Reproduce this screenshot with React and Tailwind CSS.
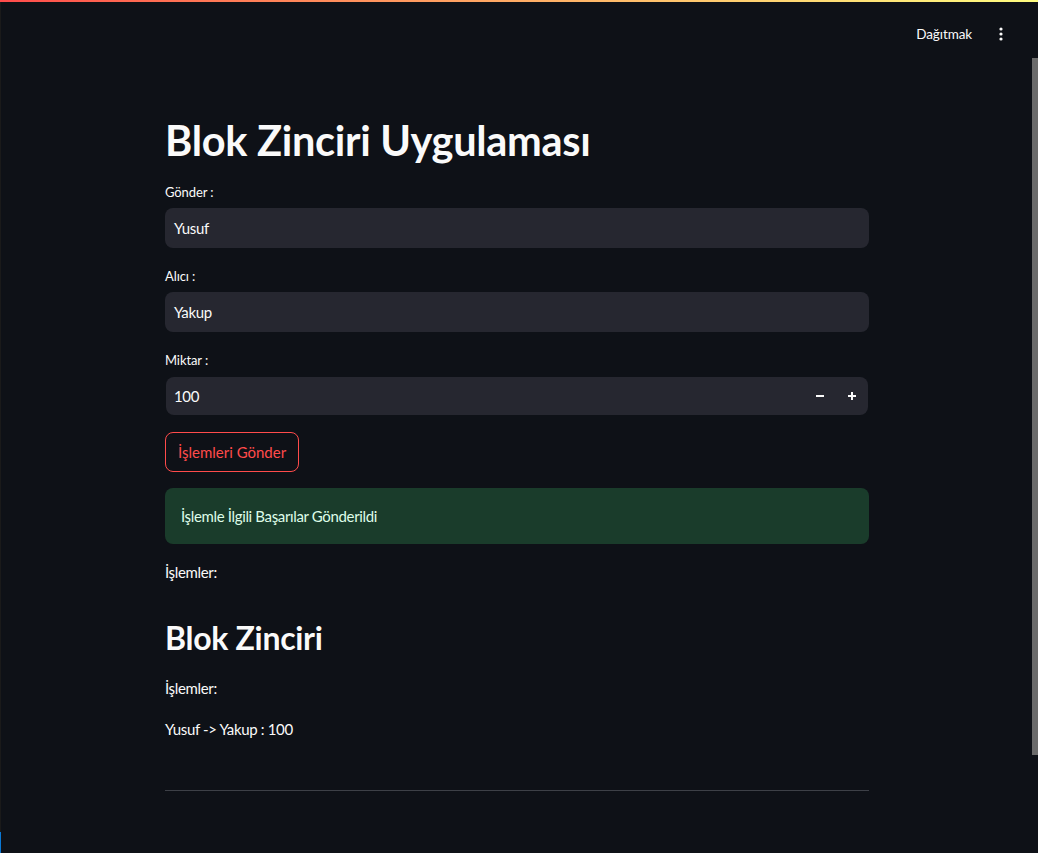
import React from "react";

const font = { fontFamily: "Lato, 'Noto Sans', sans-serif" };

function Label({ children }) {
  return <div className="text-[13px] tracking-[-0.1px] leading-[20px] text-[#fafafa] h-[24px] flex items-center">{children}</div>;
}

export default function App() {
  return (
    <div style={font} className="w-[1038px] h-[853px] bg-[#0e1117] text-[#fafafa] flex flex-col overflow-hidden">
      <div className="h-[2px] w-full bg-gradient-to-r from-[#ff4b4b] to-[#fffd80] shrink-0" />
      <div className="flex flex-1 min-h-0">
        <div className="w-[1px] bg-[#1a1a1a] flex flex-col justify-end">
          <div className="h-[21px] bg-[#0a78d4]" />
        </div>
        <div className="flex-1 flex flex-col min-w-0">
          <div className="h-[64px] flex items-center justify-end pr-[28px] gap-[27px] shrink-0">
            <span className="text-[13.5px] tracking-[-0.1px] text-[#fafafa]">Dağıtmak</span>
            <svg width="4" height="14" viewBox="0 0 4 14">
              <circle cx="2" cy="2" r="1.6" fill="#fafafa" />
              <circle cx="2" cy="7" r="1.6" fill="#fafafa" />
              <circle cx="2" cy="12" r="1.6" fill="#fafafa" />
            </svg>
          </div>
          <div className="flex">
            <div className="w-[704px] ml-[164px] flex flex-col text-[15px] tracking-[-0.35px]">
              <h1 className="text-[41.5px] leading-[52px] font-bold mt-[48px] tracking-[-0.3px]">Blok Zinciri Uygulaması</h1>
              <div className="mt-[14px]"><Label>Gönder :</Label></div>
              <div className="mt-[4px] h-[40px] rounded-[8px] bg-[#262730] flex items-center px-[9px]">Yusuf</div>
              <div className="mt-[16px]"><Label>Alıcı :</Label></div>
              <div className="mt-[4px] h-[40px] rounded-[8px] bg-[#262730] flex items-center px-[9px]">Yakup</div>
              <div className="mt-[16px]"><Label>Miktar :</Label></div>
              <div className="mt-[5px] h-[38px] rounded-[8px] bg-[#262730] flex items-center pl-[8px] ml-[1px] mr-[1px]">
                <span className="flex-1">100</span>
                <div className="flex items-center h-full">
                  <div className="w-[32px] h-full flex items-center justify-center">
                    <svg width="10" height="10" viewBox="0 0 10 10"><rect x="1" y="4" width="8" height="2" fill="#fafafa" /></svg>
                  </div>
                  <div className="w-[32px] h-full flex items-center justify-center">
                    <svg width="10" height="10" viewBox="0 0 10 10"><rect x="1" y="4" width="8" height="2" fill="#fafafa" /><rect x="4" y="1" width="2" height="8" fill="#fafafa" /></svg>
                  </div>
                </div>
              </div>
              <div className="mt-[17px]">
                <button className="h-[40px] px-[12px] rounded-[8px] border border-[#ff4b4b] text-[#ff4b4b] bg-transparent tracking-[0px]">İşlemleri Gönder</button>
              </div>
              <div className="mt-[16px] h-[56px] rounded-[8px] bg-[#1a3c2b] text-[#dffde9] flex items-center px-[16px]">
                İşlemle İlgili Başarılar Gönderildi
              </div>
              <div className="mt-[16px] leading-[24px]">İşlemler:</div>
              <h2 className="mt-[32px] text-[32px] leading-[44px] font-bold tracking-[-0.3px]">Blok Zinciri</h2>
              <div className="mt-[16px] leading-[24px]">İşlemler:</div>
              <div className="mt-[17px] leading-[24px]">Yusuf -&gt; Yakup : 100</div>
              <div className="mt-[49px] h-[1px] bg-[#3d4047]" />
            </div>
          </div>
        </div>
        <div className="w-[7px] flex flex-col">
          <div className="h-[56px]" />
          <div className="h-[697px] w-[6px] bg-[#6b6b6b] ml-[1px]" />
        </div>
      </div>
    </div>
  );
}
